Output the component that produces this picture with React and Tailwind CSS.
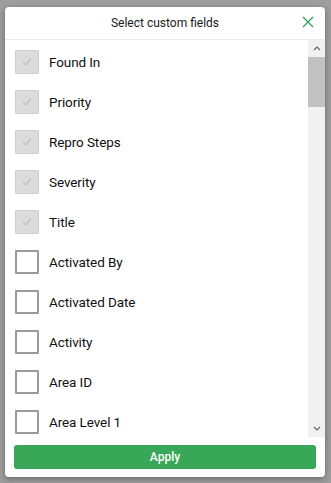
import React from 'react';

const checked = ['Found In', 'Priority', 'Repro Steps', 'Severity', 'Title'];
const unchecked = ['Activated By', 'Activated Date', 'Activity', 'Area ID', 'Area Level 1'];

function Row({ label, disabled }) {
  return (
    <div className="flex h-10 items-center gap-[10px] pl-[10px] shrink-0">
      {disabled ? (
        <div className="flex h-6 w-6 items-center justify-center rounded-[1px] border border-[#cfcfcf] bg-[#dcdcdc]">
          <svg width="12" height="12" viewBox="0 0 12 12" fill="none">
            <path d="M2.5 6.5 L5 9 L9.5 3" stroke="#c4c4c4" strokeWidth="1.6" strokeLinecap="round" strokeLinejoin="round" />
          </svg>
        </div>
      ) : (
        <div className="h-6 w-6 rounded-[1px] border-2 border-[#9a9a9a] bg-white" />
      )}
      <span className="text-[13.5px] tracking-[-0.1px] text-[#111]">{label}</span>
    </div>
  );
}

export default function App() {
  return (
    <div
      className="h-[483px] w-[331px] bg-[#9e9e9e] pl-[5px] pt-[7px]"
      style={{ fontFamily: 'Roboto, "Liberation Sans", sans-serif' }}
    >
      <div className="flex h-[470px] w-[320px] flex-col overflow-hidden rounded-[4px] bg-white shadow-[0_2px_6px_rgba(0,0,0,0.35)]">
        {/* header */}
        <div className="relative flex h-[33px] shrink-0 items-center justify-center border-b border-[#ececec]">
          <span className="text-[12px] text-[#1a1a1a]">Select custom fields</span>
          <button className="absolute right-[11px] top-[9px]">
            <svg width="12" height="12" viewBox="0 0 12 12">
              <path d="M1 1 L11 11 M11 1 L1 11" stroke="#2ea35a" strokeWidth="1.3" />
            </svg>
          </button>
        </div>

        {/* list */}
        <div className="flex h-[397px] shrink-0">
          <div className="flex flex-1 flex-col overflow-hidden pt-[2px]">
            {checked.map((l) => (
              <Row key={l} label={l} disabled />
            ))}
            {unchecked.map((l) => (
              <Row key={l} label={l} />
            ))}
          </div>
          <div className="flex w-[17px] flex-col items-center bg-[#f1f1f1]">
            <div className="flex h-[17px] w-full items-center justify-center">
              <svg width="8" height="5" viewBox="0 0 8 5">
                <path d="M1 4 L4 1 L7 4" stroke="#666" strokeWidth="1.2" fill="none" />
              </svg>
            </div>
            <div className="h-[50px] w-full bg-[#c1c1c1]" />
            <div className="flex-1" />
            <div className="flex h-[17px] w-full items-center justify-center">
              <svg width="8" height="5" viewBox="0 0 8 5">
                <path d="M1 1 L4 4 L7 1" stroke="#666" strokeWidth="1.2" fill="none" />
              </svg>
            </div>
          </div>
        </div>

        {/* footer */}
        <div className="px-[9px] pt-[8px]">
          <button className="flex h-6 w-full items-center justify-center rounded-[3px] bg-[#38a758] text-[12px] font-medium text-white">
            Apply
          </button>
        </div>
      </div>
    </div>
  );
}
